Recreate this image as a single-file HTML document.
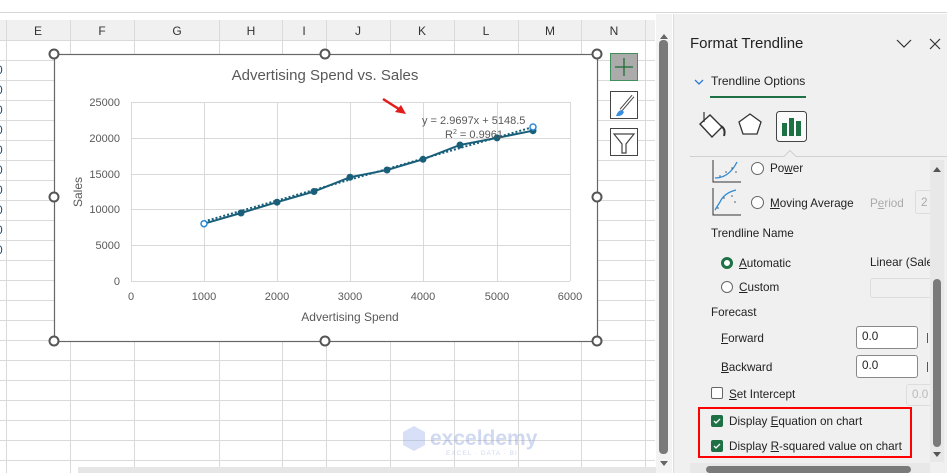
<!DOCTYPE html>
<html><head><meta charset="utf-8"><style>
*{margin:0;padding:0;box-sizing:border-box}
body{width:947px;height:473px;overflow:hidden;background:#fff;font-family:"Liberation Sans",sans-serif;position:relative}
.a{position:absolute}
.t{position:absolute;font-size:11.7px;color:#222;white-space:nowrap}
u{text-decoration:underline}
</style></head><body>
<div class="a" style="left:0;top:0;width:947px;height:13px;background:#fff;border-bottom:1px solid #d6d6d6"></div>
<!-- sheet -->
<svg class="a" style="left:0;top:14px" width="672" height="459">
<rect x="0" y="6" width="655" height="20" fill="#f0f0f0"/>
<g stroke="#dadada" stroke-width="1">
<line x1="0" y1="26.5" x2="655" y2="26.5"/>
<line x1="0" y1="46.5" x2="655" y2="46.5"/><line x1="0" y1="66.5" x2="655" y2="66.5"/><line x1="0" y1="86.5" x2="655" y2="86.5"/><line x1="0" y1="106.5" x2="655" y2="106.5"/><line x1="0" y1="126.5" x2="655" y2="126.5"/><line x1="0" y1="146.5" x2="655" y2="146.5"/><line x1="0" y1="166.5" x2="655" y2="166.5"/><line x1="0" y1="186.5" x2="655" y2="186.5"/><line x1="0" y1="206.5" x2="655" y2="206.5"/><line x1="0" y1="226.5" x2="655" y2="226.5"/><line x1="0" y1="246.5" x2="655" y2="246.5"/><line x1="0" y1="266.5" x2="655" y2="266.5"/><line x1="0" y1="286.5" x2="655" y2="286.5"/><line x1="0" y1="306.5" x2="655" y2="306.5"/><line x1="0" y1="326.5" x2="655" y2="326.5"/><line x1="0" y1="346.5" x2="655" y2="346.5"/><line x1="0" y1="366.5" x2="655" y2="366.5"/><line x1="0" y1="386.5" x2="655" y2="386.5"/><line x1="0" y1="406.5" x2="655" y2="406.5"/><line x1="0" y1="426.5" x2="655" y2="426.5"/><line x1="0" y1="446.5" x2="655" y2="446.5"/>
<line x1="6.5" y1="6" x2="6.5" y2="459"/><line x1="70.5" y1="6" x2="70.5" y2="459"/><line x1="134.5" y1="6" x2="134.5" y2="459"/><line x1="219.5" y1="6" x2="219.5" y2="459"/><line x1="282.5" y1="6" x2="282.5" y2="459"/><line x1="326.5" y1="6" x2="326.5" y2="459"/><line x1="390.5" y1="6" x2="390.5" y2="459"/><line x1="454.5" y1="6" x2="454.5" y2="459"/><line x1="518.5" y1="6" x2="518.5" y2="459"/><line x1="581.5" y1="6" x2="581.5" y2="459"/><line x1="645.5" y1="6" x2="645.5" y2="459"/>
</g>
<g font-size="12" fill="#333" text-anchor="middle" font-family="Liberation Sans">
<text x="38" y="21">E</text><text x="102" y="21">F</text><text x="177" y="21">G</text><text x="251" y="21">H</text><text x="304" y="21">I</text><text x="358" y="21">J</text><text x="422" y="21">K</text><text x="486" y="21">L</text><text x="550" y="21">M</text><text x="614" y="21">N</text>
</g>
<g font-size="12" fill="#1f4e79" font-family="Liberation Sans">
<text x="-4" y="60">0</text><text x="-4" y="80">0</text><text x="-4" y="100">0</text><text x="-4" y="120">0</text><text x="-4" y="140">0</text><text x="-4" y="160">0</text><text x="-4" y="180">0</text><text x="-4" y="200">0</text><text x="-4" y="220">0</text><text x="-4" y="240">0</text>
</g>
<rect x="656" y="0" width="16" height="459" fill="#f3f3f3"/>
<rect x="659" y="26" width="9" height="414" rx="4" fill="#7a7a7a"/>
<path d="M660 25 l4 -5 l4 5z" fill="#666"/><path d="M660 447 l4 5 l4 -5z" fill="#666"/>
<rect x="78" y="453" width="578" height="6" fill="#e6e6e6"/>
</svg>
<!-- chart -->
<svg class="a" style="left:0;top:0" width="660" height="473" font-family="Liberation Sans">
<rect x="54.5" y="54.5" width="543" height="287" fill="#fff" stroke="#666" stroke-width="1.2"/>
<text x="325" y="80" font-size="15" fill="#595959" text-anchor="middle">Advertising Spend vs. Sales</text>
<g stroke="#d9d9d9" stroke-width="1">
<line x1="131" y1="102.5" x2="570" y2="102.5"/><line x1="131" y1="138.5" x2="570" y2="138.5"/><line x1="131" y1="174.5" x2="570" y2="174.5"/><line x1="131" y1="209.5" x2="570" y2="209.5"/><line x1="131" y1="245.5" x2="570" y2="245.5"/><line x1="131" y1="281.5" x2="570" y2="281.5"/>
<line x1="131.5" y1="102" x2="131.5" y2="281"/><line x1="204.5" y1="102" x2="204.5" y2="281"/><line x1="277.5" y1="102" x2="277.5" y2="281"/><line x1="350.5" y1="102" x2="350.5" y2="281"/><line x1="423.5" y1="102" x2="423.5" y2="281"/><line x1="497.5" y1="102" x2="497.5" y2="281"/><line x1="570.5" y1="102" x2="570.5" y2="281"/>
</g>
<g font-size="11" fill="#595959" text-anchor="end">
<text x="120" y="106">25000</text><text x="120" y="142">20000</text><text x="120" y="178">15000</text><text x="120" y="213">10000</text><text x="120" y="249">5000</text><text x="120" y="285">0</text>
</g>
<g font-size="11" fill="#595959" text-anchor="middle">
<text x="131" y="300">0</text><text x="204" y="300">1000</text><text x="277" y="300">2000</text><text x="350" y="300">3000</text><text x="423" y="300">4000</text><text x="497" y="300">5000</text><text x="570" y="300">6000</text>
</g>
<text x="350" y="321" font-size="12" fill="#595959" text-anchor="middle">Advertising Spend</text>
<text transform="translate(82,192) rotate(-90)" font-size="12" fill="#595959" text-anchor="middle">Sales</text>
<line x1="204" y1="221.5" x2="534" y2="126.8" stroke="#1a5f7a" stroke-width="2" stroke-dasharray="2,2"/>
<polyline points="204,223.7 241,213 277,202.2 314,191.5 350,177.2 387,170 423,159.3 460,145 497,137.9 533,130.7" fill="none" stroke="#1a5f7a" stroke-width="2"/>
<g fill="#1a5f7a"><circle cx="241" cy="213" r="3.5"/><circle cx="277" cy="202.2" r="3.5"/><circle cx="314" cy="191.5" r="3.5"/><circle cx="350" cy="177.2" r="3.5"/><circle cx="387" cy="170" r="3.5"/><circle cx="423" cy="159.3" r="3.5"/><circle cx="460" cy="145" r="3.5"/><circle cx="497" cy="137.9" r="3.5"/><circle cx="533" cy="130.7" r="3.5"/></g>
<circle cx="204" cy="223.7" r="3" fill="#fff" stroke="#2b8ad8" stroke-width="1.5"/>
<circle cx="533" cy="127" r="3" fill="#fff" stroke="#2b8ad8" stroke-width="1.5"/>
<text x="422" y="124" font-size="11" fill="#595959">y = 2.9697x + 5148.5</text>
<text x="445" y="138" font-size="11" fill="#595959">R<tspan font-size="7" dy="-4">2</tspan><tspan dy="4"> = 0.9961</tspan></text>
<path d="M383 99 L402 111" stroke="#e31b1b" stroke-width="2.5"/><path d="M406 114 L395 112 L401 105z" fill="#e31b1b"/>
<g fill="#fff" stroke="#555" stroke-width="2">
<circle cx="54" cy="54" r="4.5"/><circle cx="325" cy="54" r="4.5"/><circle cx="597" cy="54" r="4.5"/><circle cx="54" cy="197" r="4.5"/><circle cx="597" cy="197" r="4.5"/><circle cx="54" cy="341" r="4.5"/><circle cx="325" cy="341" r="4.5"/><circle cx="597" cy="341" r="4.5"/>
</g>
<rect x="610.5" y="53.5" width="27" height="27" fill="#ababab" stroke="#3f8f5a"/>
<path d="M624 58 v18 M615 67 h18" stroke="#1e6b33" stroke-width="1.3"/>
<rect x="610.5" y="91.5" width="27" height="27" fill="#fff" stroke="#444"/>
<path d="M633 96 L621 110" stroke="#444" stroke-width="3.5"/><path d="M633 96 L621 110" stroke="#fff" stroke-width="1.5"/>
<path d="M616 116 q2 -6 6 -6 l2 2 q-2 5 -8 4z" fill="#3a8fe0"/>
<rect x="610.5" y="128.5" width="27" height="27" fill="#fff" stroke="#444"/>
<path d="M614 134 h20 l-8 10 v9 h-4 v-9z" fill="#fff" stroke="#444" stroke-width="1.2"/>
<g opacity="0.35"><path d="M403 432 l11 -6 l11 6 v13 l-11 6 l-11 -6z" fill="#8fa7e8"/>
<text x="430" y="445" font-size="21" font-weight="bold" fill="#7b95d8">exceldemy</text>
<text x="446" y="455" font-size="6.5" fill="#7b95d8" letter-spacing="1">EXCEL · DATA · BI</text></g>
</svg>
<!-- panel -->
<div class="a" style="left:673px;top:14px;width:274px;height:459px;background:#f0f0f0;border-left:1px solid #ddd"></div>
<div class="t" style="left:690px;top:35px;font-size:15px;color:#222">Format Trendline</div>
<svg class="a" style="left:895px;top:36px" width="50" height="16"><path d="M2 4 l7 7 l7 -7" fill="none" stroke="#333" stroke-width="1.2"/><path d="M35 3 l10 10 M45 3 l-10 10" stroke="#333" stroke-width="1.2"/></svg>
<svg class="a" style="left:694px;top:78px" width="10" height="8"><path d="M1 2 l4 4 l4 -4" fill="none" stroke="#2a7ad6" stroke-width="1.3"/></svg>
<div class="t" style="left:711px;top:74px;font-size:12px">Trendline Options</div>
<div class="a" style="left:710px;top:96px;width:96px;height:2px;background:#1e7145"></div>
<svg class="a" style="left:690px;top:108px" width="257" height="60">
<path d="M10 16 l10 -9 l12 12 l-10 10z" fill="#fff" stroke="#333" stroke-width="1.4"/><path d="M14 4 v10" stroke="#333" stroke-width="1.2"/><path d="M31 18 q5 3 3 10" fill="none" stroke="#333" stroke-width="2"/>
<path d="M60 6 l11 8 l-4 12 h-14 l-4 -12z" fill="#fff" stroke="#333" stroke-width="1.3"/>
<rect x="86.5" y="3.5" width="30" height="30" rx="3" fill="#fafafa" stroke="#444"/>
<rect x="92" y="15" width="5" height="13" fill="#1e7145"/><rect x="99" y="10" width="5" height="18" fill="#1e7145"/><rect x="106" y="13" width="5" height="15" fill="#1e7145"/>
<path d="M0 48.5 h94 l6 -6 l6 6 h151" fill="none" stroke="#d0d0d0"/>
</svg>
<svg class="a" style="left:710px;top:158px" width="32" height="60">
<path d="M3 2 v22 h28" fill="none" stroke="#333"/><path d="M5 20 q14 0 22 -16" fill="none" stroke="#2b8ad8" stroke-width="1.3"/>
<path d="M3 30 v27 h28" fill="none" stroke="#333"/><path d="M5 52 l5 -8 q4 -9 16 -12" fill="none" stroke="#2b8ad8" stroke-width="1.3"/>
<g fill="#555"><circle cx="10" cy="18" r=".8"/><circle cx="16" cy="14" r=".8"/><circle cx="22" cy="10" r=".8"/><circle cx="26" cy="14" r=".8"/><circle cx="8" cy="50" r=".8"/><circle cx="14" cy="40" r=".8"/><circle cx="22" cy="38" r=".8"/><circle cx="25" cy="44" r=".8"/></g>
</svg>
<div class="a" style="left:751px;top:162px;width:13px;height:13px;border:1px solid #666;border-radius:50%;background:#fff"></div>
<div class="t" style="left:770px;top:162px">Po<u>w</u>er</div>
<div class="a" style="left:751px;top:196px;width:13px;height:13px;border:1px solid #666;border-radius:50%;background:#fff"></div>
<div class="t" style="left:770px;top:197px"><u>M</u>oving Average</div>
<div class="t" style="left:870px;top:197px;color:#aaa">P<u>e</u>riod</div>
<div class="a" style="left:915px;top:190px;width:20px;height:24px;border:1px solid #ddd;border-radius:3px"></div>
<div class="t" style="left:921px;top:196px;color:#aaa">2</div>
<div class="t" style="left:711px;top:227px">Trendline Name</div>
<div class="a" style="left:721px;top:257px;width:12px;height:12px;border:3px solid #1e7145;border-radius:50%;background:#fff"></div>
<div class="t" style="left:739px;top:257px"><u>A</u>utomatic</div>
<div class="t" style="left:870px;top:256px">Linear (Sale</div>
<div class="a" style="left:721px;top:281px;width:12px;height:12px;border:1px solid #666;border-radius:50%;background:#fff"></div>
<div class="t" style="left:739px;top:281px"><u>C</u>ustom</div>
<div class="a" style="left:870px;top:278px;width:62px;height:20px;border:1px solid #ddd;border-radius:3px"></div>
<div class="t" style="left:711px;top:306px">Forecast</div>
<div class="t" style="left:721px;top:332px"><u>F</u>orward</div>
<div class="a" style="left:856px;top:326px;width:62px;height:23px;border:1px solid #888;border-radius:3px;background:#fff"></div>
<div class="t" style="left:862px;top:330px">0.0</div>
<div class="t" style="left:721px;top:361px"><u>B</u>ackward</div>
<div class="a" style="left:856px;top:355px;width:62px;height:23px;border:1px solid #888;border-radius:3px;background:#fff"></div>
<div class="t" style="left:862px;top:359px">0.0</div>
<div class="a" style="left:927px;top:333px;width:1px;height:10px;background:#555"></div>
<div class="a" style="left:927px;top:362px;width:1px;height:10px;background:#555"></div>
<div class="a" style="left:711px;top:387px;width:12px;height:12px;border:1px solid #666;border-radius:2px;background:#fff"></div>
<div class="t" style="left:729px;top:388px"><u>S</u>et Intercept</div>
<div class="a" style="left:906px;top:384px;width:28px;height:22px;border:1px solid #ddd;border-radius:3px"></div>
<div class="t" style="left:912px;top:388px;color:#bbb">0.0</div>
<div class="a" style="left:698px;top:407px;width:214px;height:51px;border:2px solid #f00"></div>
<div class="a" style="left:711px;top:415px;width:12px;height:12px;background:#1e7145;border-radius:2px"></div>
<svg class="a" style="left:711px;top:415px" width="12" height="12"><path d="M3 6 l2 2 l4 -4" fill="none" stroke="#fff" stroke-width="1.3"/></svg>
<div class="t" style="left:729px;top:415px">Display <u>E</u>quation on chart</div>
<div class="a" style="left:711px;top:440px;width:12px;height:12px;background:#1e7145;border-radius:2px"></div>
<svg class="a" style="left:711px;top:440px" width="12" height="12"><path d="M3 6 l2 2 l4 -4" fill="none" stroke="#fff" stroke-width="1.3"/></svg>
<div class="t" style="left:729px;top:440px">Display <u>R</u>-squared value on chart</div>
<div class="a" style="left:930px;top:160px;width:14px;height:302px;background:#e8e8e8"></div>
<svg class="a" style="left:930px;top:160px" width="14" height="302"><path d="M3 12 l4 -5 l4 5z" fill="#555"/><rect x="3" y="119" width="8" height="168" rx="4" fill="#7a7a7a"/><path d="M3 292 l4 5 l4 -5z" fill="#555"/></svg>
<div class="a" style="left:690px;top:463px;width:240px;height:10px;background:#e8e8e8"></div>
<div class="a" style="left:706px;top:466px;width:205px;height:7px;border-radius:4px;background:#7a7a7a"></div>
</body></html>
